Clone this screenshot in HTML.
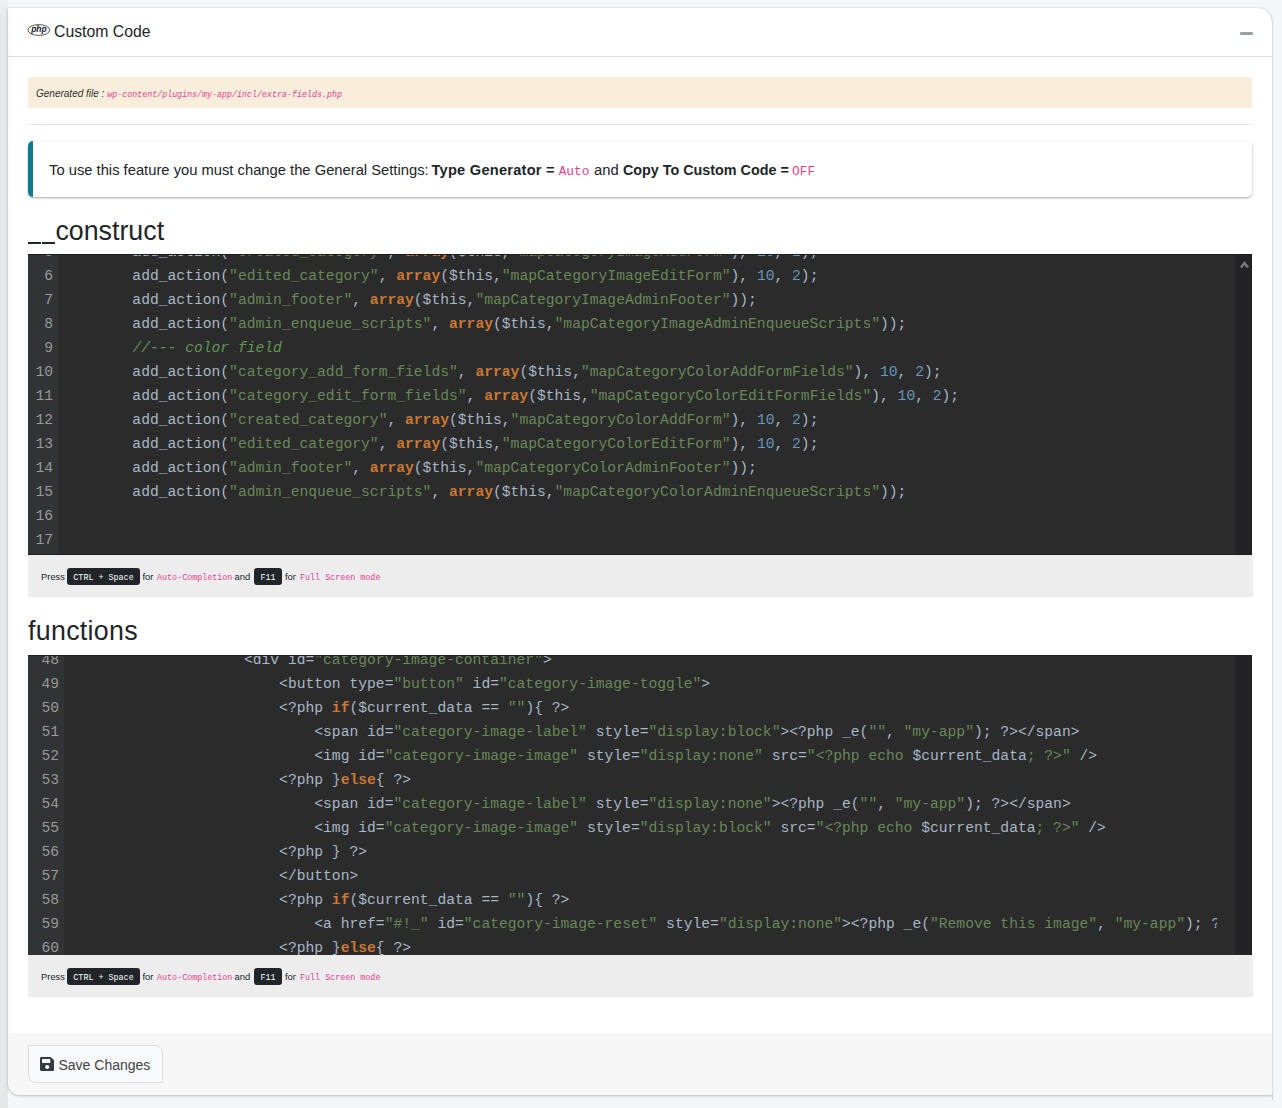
<!DOCTYPE html>
<html><head><meta charset="utf-8">
<style>
*{box-sizing:border-box;margin:0;padding:0}
html,body{width:1282px;height:1108px;overflow:hidden}
body{background:#f4f6f9;font-family:"Liberation Sans",sans-serif;color:#212529;position:relative}
.abs{position:absolute}
.card{left:8px;top:8px;width:1264px;height:1087px;background:#fff;border-radius:0 14px 0 12px;box-shadow:0 0 1px rgba(0,0,0,.3),0 1px 3px rgba(0,0,0,.2);overflow:hidden}
.hdr{left:0;top:0;width:1265px;height:49px;border-bottom:1px solid rgba(0,0,0,.125)}
.title{left:46px;top:14px;font-size:15.8px;line-height:20px;color:#212529;white-space:nowrap}
.phpico{left:19px;top:16px}
.minus{left:1232px;top:24px;width:13px;height:3px;background:#9c9fa3;border-radius:1px}
.gen{left:20px;top:69px;width:1224px;height:31px;background:#f9eedb}
.gen .lab{left:8px;top:10px;font-size:10px;font-style:italic;color:#333;white-space:nowrap;line-height:13px}
.gen .lab code{font-family:"Liberation Mono",monospace;font-size:8.33px;color:#e83e8c;font-style:italic}
.hr{left:20px;top:116px;width:1224px;height:1px;background:#e5e5e5}
.callout{left:20px;top:133px;width:1224px;height:56px;background:#fff;border-left:5px solid #117a8b;border-radius:5px;box-shadow:0 1px 3px rgba(0,0,0,.12),0 1px 2px rgba(0,0,0,.24)}
.callout .tx{top:20px;font-size:14.75px;line-height:18px;white-space:nowrap;color:#212529}
.callout b{font-weight:bold;font-size:14.6px}
.callout code{font-family:"Liberation Mono",monospace;font-size:12.8px;color:#e83e8c}
.h3{font-size:26.8px;line-height:32px;white-space:nowrap;color:#212529}
.ed{left:20px;width:1224px;height:301px;background:#2b2b2b;border-top:1px solid #1e1e1e;border-bottom:1px solid #1e1e1e;border-right:1px solid #1e1e1e;overflow:hidden}
.gut{left:0;top:0;height:300px;background:#313335}
.ln{position:absolute;right:5px;height:24px;line-height:24px;font-family:"Liberation Mono",monospace;font-size:14.667px;color:#999;text-align:right}
.code{top:0;height:300px;overflow:hidden}
.cl{position:absolute;left:0;height:24px;line-height:24px;font-family:"Liberation Mono",monospace;font-size:14.667px;color:#a9b7c6;white-space:pre}
.cl i{font-style:normal}
.cl i.k{color:#cc7832;font-weight:bold}
.cl i.s{color:#6a8759}
.cl i.n{color:#6897bb}
.cl i.c{color:#629755;font-style:italic}
.sb{top:0;width:17px;height:300px;left:1206px;background:#232325;border-left:2px solid #2d2d2f;width:18px;left:1205px}
.arr{left:1211.5px;top:5.5px}
.bar{left:20px;width:1225px;height:42px;background:#ededed}
.bar .t{top:16px;font-size:9.4px;line-height:12px;white-space:nowrap;color:#212529}
.kbd{top:13px;height:17px;background:#212529;color:#fff;border-radius:3px;font-family:"Liberation Mono",monospace;font-size:8.4px;line-height:21px;text-align:center;white-space:nowrap}
.bar code{font-family:"Liberation Mono",monospace;font-size:8.4px;color:#e83e8c}
.ftr{left:0;top:1025px;width:1265px;height:62px;background:#f7f7f7}
.btn{left:20px;top:12px;width:135px;height:38px;background:#f8f9fa;border:1px solid #dcdcdc;border-radius:0 8px 0 8px}
.btn .tx{left:29.5px;top:10px;font-size:14px;line-height:18px;color:#444;white-space:nowrap}
.btn svg{position:absolute;left:11px;top:11px}
</style></head><body>
<div class="abs" style="left:0;top:0;width:8px;height:1108px;background:linear-gradient(to bottom,#eff1f4 0,#e7e8ea 14px,#e6e7e9 100%)"></div>
<div class="abs card">
  <div class="abs" style="left:0;top:0;width:6px;height:1087px;background:linear-gradient(to right,rgba(0,0,0,.025),rgba(0,0,0,0))"></div>
  <div class="abs hdr">
    <svg class="abs phpico" width="23" height="12" viewBox="0 0 23 12"><ellipse cx="11.8" cy="6" rx="10.9" ry="5.4" fill="none" stroke="#444" stroke-width="0.9"/><text x="12" y="7.8" text-anchor="middle" font-family="Liberation Sans" font-weight="bold" font-style="italic" font-size="8.6" fill="#1a1f2e">php</text></svg>
    <div class="abs title">Custom Code</div>
    <div class="abs minus"></div>
  </div>
  <div class="abs gen"><div class="abs lab">Generated file : <code>wp-content/plugins/my-app/incl/extra-fields.php</code></div></div>
  <div class="abs hr"></div>
  <div class="abs callout"><div class="abs tx" style="left:16px">To use this feature you must change the General Settings:</div><div class="abs tx" style="left:398.5px"><b style="letter-spacing:0.25px">Type Generator =</b></div><div class="abs tx" style="left:525.7px"><code>Auto</code></div><div class="abs tx" style="left:561.1px">and</div><div class="abs tx" style="left:589.9px"><b style="font-size:14.35px">Copy To Custom Code =</b></div><div class="abs tx" style="left:759.1px"><code>OFF</code></div></div>

  <div class="abs" style="left:20px;top:234px;width:13px;height:2px;background:#212529"></div><div class="abs" style="left:34px;top:234px;width:13px;height:2px;background:#212529"></div><div class="abs h3" style="left:47.4px;top:207px;font-size:26.8px">construct</div>
  <div class="abs ed" style="top:246px">
    <div class="abs gut" style="width:30px"><div class="ln" style="top:-15px">5</div><div class="ln" style="top:9px">6</div><div class="ln" style="top:33px">7</div><div class="ln" style="top:57px">8</div><div class="ln" style="top:81px">9</div><div class="ln" style="top:105px">10</div><div class="ln" style="top:129px">11</div><div class="ln" style="top:153px">12</div><div class="ln" style="top:177px">13</div><div class="ln" style="top:201px">14</div><div class="ln" style="top:225px">15</div><div class="ln" style="top:249px">16</div><div class="ln" style="top:273px">17</div></div>
    <div class="abs code" style="left:34px;width:1155px"><div class="cl" style="top:-15px">        add_action(<i class="s">&quot;created_category&quot;</i>, <i class="k">array</i>($this,<i class="s">&quot;mapCategoryImageAddForm&quot;</i>), <i class="n">10</i>, <i class="n">2</i>);</div><div class="cl" style="top:9px">        add_action(<i class="s">&quot;edited_category&quot;</i>, <i class="k">array</i>($this,<i class="s">&quot;mapCategoryImageEditForm&quot;</i>), <i class="n">10</i>, <i class="n">2</i>);</div><div class="cl" style="top:33px">        add_action(<i class="s">&quot;admin_footer&quot;</i>, <i class="k">array</i>($this,<i class="s">&quot;mapCategoryImageAdminFooter&quot;</i>));</div><div class="cl" style="top:57px">        add_action(<i class="s">&quot;admin_enqueue_scripts&quot;</i>, <i class="k">array</i>($this,<i class="s">&quot;mapCategoryImageAdminEnqueueScripts&quot;</i>));</div><div class="cl" style="top:81px">        <i class="c">//--- color field</i></div><div class="cl" style="top:105px">        add_action(<i class="s">&quot;category_add_form_fields&quot;</i>, <i class="k">array</i>($this,<i class="s">&quot;mapCategoryColorAddFormFields&quot;</i>), <i class="n">10</i>, <i class="n">2</i>);</div><div class="cl" style="top:129px">        add_action(<i class="s">&quot;category_edit_form_fields&quot;</i>, <i class="k">array</i>($this,<i class="s">&quot;mapCategoryColorEditFormFields&quot;</i>), <i class="n">10</i>, <i class="n">2</i>);</div><div class="cl" style="top:153px">        add_action(<i class="s">&quot;created_category&quot;</i>, <i class="k">array</i>($this,<i class="s">&quot;mapCategoryColorAddForm&quot;</i>), <i class="n">10</i>, <i class="n">2</i>);</div><div class="cl" style="top:177px">        add_action(<i class="s">&quot;edited_category&quot;</i>, <i class="k">array</i>($this,<i class="s">&quot;mapCategoryColorEditForm&quot;</i>), <i class="n">10</i>, <i class="n">2</i>);</div><div class="cl" style="top:201px">        add_action(<i class="s">&quot;admin_footer&quot;</i>, <i class="k">array</i>($this,<i class="s">&quot;mapCategoryColorAdminFooter&quot;</i>));</div><div class="cl" style="top:225px">        add_action(<i class="s">&quot;admin_enqueue_scripts&quot;</i>, <i class="k">array</i>($this,<i class="s">&quot;mapCategoryColorAdminEnqueueScripts&quot;</i>));</div><div class="cl" style="top:249px"></div><div class="cl" style="top:273px"></div></div>
    <div class="abs sb"></div>
    <svg class="abs arr" width="10" height="7" viewBox="0 0 10 7"><path d="M1 6.5 L4.5 2 L8 6.5" fill="none" stroke="#7a7a7a" stroke-width="2.4" stroke-linejoin="miter"/></svg>
  </div>
  <div class="abs bar" style="top:547px"><div class="abs t" style="left:13px">Press</div><div class="abs kbd" style="left:39px;width:73px">CTRL + Space</div><div class="abs t" style="left:114.5px">for</div><div class="abs t" style="left:129px"><code>Auto-Completion</code></div><div class="abs t" style="left:206.5px">and</div><div class="abs kbd" style="left:226px;width:28px">F11</div><div class="abs t" style="left:257px">for</div><div class="abs t" style="left:272px"><code>Full Screen mode</code></div></div>

  <div class="abs h3" style="left:20px;top:607px;letter-spacing:0.3px">functions</div>
  <div class="abs ed" style="top:647px">
    <div class="abs gut" style="width:36px"><div class="ln" style="top:-8px">48</div><div class="ln" style="top:16px">49</div><div class="ln" style="top:40px">50</div><div class="ln" style="top:64px">51</div><div class="ln" style="top:88px">52</div><div class="ln" style="top:112px">53</div><div class="ln" style="top:136px">54</div><div class="ln" style="top:160px">55</div><div class="ln" style="top:184px">56</div><div class="ln" style="top:208px">57</div><div class="ln" style="top:232px">58</div><div class="ln" style="top:256px">59</div><div class="ln" style="top:280px">60</div></div>
    <div class="abs code" style="left:40px;width:1149px"><div class="cl" style="top:-8px">                    &lt;div id=<i class="s">&quot;category-image-container&quot;</i>&gt;</div><div class="cl" style="top:16px">                        &lt;button type=<i class="s">&quot;button&quot;</i> id=<i class="s">&quot;category-image-toggle&quot;</i>&gt;</div><div class="cl" style="top:40px">                        &lt;?php <i class="k">if</i>($current_data == <i class="s">&quot;&quot;</i>){ ?&gt;</div><div class="cl" style="top:64px">                            &lt;span id=<i class="s">&quot;category-image-label&quot;</i> style=<i class="s">&quot;display:block&quot;</i>&gt;&lt;?php _e(<i class="s">&quot;&quot;</i>, <i class="s">&quot;my-app&quot;</i>); ?&gt;&lt;/span&gt;</div><div class="cl" style="top:88px">                            &lt;img id=<i class="s">&quot;category-image-image&quot;</i> style=<i class="s">&quot;display:none&quot;</i> src=<i class="s">&quot;&lt;?php echo </i>$current_data<i class="s">; ?&gt;&quot;</i> /&gt;</div><div class="cl" style="top:112px">                        &lt;?php }<i class="k">else</i>{ ?&gt;</div><div class="cl" style="top:136px">                            &lt;span id=<i class="s">&quot;category-image-label&quot;</i> style=<i class="s">&quot;display:none&quot;</i>&gt;&lt;?php _e(<i class="s">&quot;&quot;</i>, <i class="s">&quot;my-app&quot;</i>); ?&gt;&lt;/span&gt;</div><div class="cl" style="top:160px">                            &lt;img id=<i class="s">&quot;category-image-image&quot;</i> style=<i class="s">&quot;display:block&quot;</i> src=<i class="s">&quot;&lt;?php echo </i>$current_data<i class="s">; ?&gt;&quot;</i> /&gt;</div><div class="cl" style="top:184px">                        &lt;?php } ?&gt;</div><div class="cl" style="top:208px">                        &lt;/button&gt;</div><div class="cl" style="top:232px">                        &lt;?php <i class="k">if</i>($current_data == <i class="s">&quot;&quot;</i>){ ?&gt;</div><div class="cl" style="top:256px">                            &lt;a href=<i class="s">&quot;#!_&quot;</i> id=<i class="s">&quot;category-image-reset&quot;</i> style=<i class="s">&quot;display:none&quot;</i>&gt;&lt;?php _e(<i class="s">&quot;Remove this image&quot;</i>, <i class="s">&quot;my-app&quot;</i>); ?&gt;&lt;/a&gt;</div><div class="cl" style="top:280px">                        &lt;?php }<i class="k">else</i>{ ?&gt;</div></div>
    <div class="abs sb"></div>
  </div>
  <div class="abs bar" style="top:947px"><div class="abs t" style="left:13px">Press</div><div class="abs kbd" style="left:39px;width:73px">CTRL + Space</div><div class="abs t" style="left:114.5px">for</div><div class="abs t" style="left:129px"><code>Auto-Completion</code></div><div class="abs t" style="left:206.5px">and</div><div class="abs kbd" style="left:226px;width:28px">F11</div><div class="abs t" style="left:257px">for</div><div class="abs t" style="left:272px"><code>Full Screen mode</code></div></div>

  <div class="abs ftr">
    <div class="abs btn">
      <svg width="14.4" height="14" viewBox="0 32 448 448" preserveAspectRatio="none"><path fill="#343a40" d="M433.9 129.9l-83.9-83.9A48 48 0 0 0 316.1 32H48C21.5 32 0 53.5 0 80v352c0 26.5 21.5 48 48 48h352c26.5 0 48-21.5 48-48V163.9a48 48 0 0 0-14.1-33.9zM224 416c-35.3 0-64-28.7-64-64 0-35.3 28.7-64 64-64s64 28.7 64 64c0 35.3-28.7 64-64 64zm96-304.5V212c0 6.6-5.4 12-12 12H76c-6.6 0-12-5.4-12-12V108c0-6.6 5.4-12 12-12h228.5c3.2 0 6.2 1.3 8.5 3.5l3.5 3.5A12 12 0 0 1 320 111.5z"/></svg>
      <div class="abs tx">Save Changes</div>
    </div>
  </div>
</div>
<div class="abs" style="left:1272px;top:1093px;width:1px;height:7px;background:#cfd1d4"></div>
</body></html>
